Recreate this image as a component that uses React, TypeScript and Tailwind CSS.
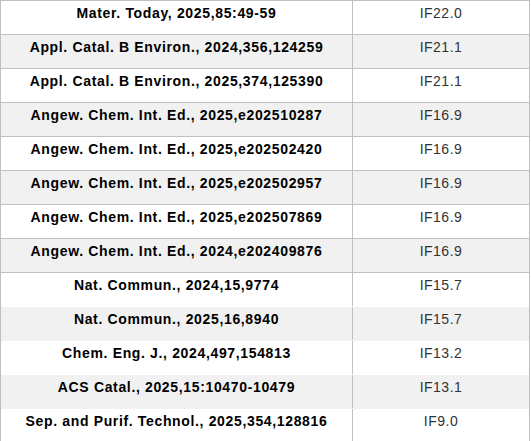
const papers = [
  { ref: 'Mater. Today, 2025,85:49-59', impact: 'IF22.0' },
  { ref: 'Appl. Catal. B Environ., 2024,356,124259', impact: 'IF21.1' },
  { ref: 'Appl. Catal. B Environ., 2025,374,125390', impact: 'IF21.1' },
  { ref: 'Angew. Chem. Int. Ed., 2025,e202510287', impact: 'IF16.9' },
  { ref: 'Angew. Chem. Int. Ed., 2025,e202502420', impact: 'IF16.9' },
  { ref: 'Angew. Chem. Int. Ed., 2025,e202502957', impact: 'IF16.9' },
  { ref: 'Angew. Chem. Int. Ed., 2025,e202507869', impact: 'IF16.9' },
  { ref: 'Angew. Chem. Int. Ed., 2024,e202409876', impact: 'IF16.9' },
  { ref: 'Nat. Commun., 2024,15,9774', impact: 'IF15.7' },
  { ref: 'Nat. Commun., 2025,16,8940', impact: 'IF15.7' },
  { ref: 'Chem. Eng. J., 2024,497,154813', impact: 'IF13.2' },
  { ref: 'ACS Catal., 2025,15:10470-10479', impact: 'IF13.1' },
  { ref: 'Sep. and Purif. Technol., 2025,354,128816', impact: 'IF9.0' },
];

export default function App() {
  return (
    <div className="w-[531px] h-[441px] overflow-hidden bg-white font-['Liberation_Sans',Arial,sans-serif]">
      <div className="w-[530px] border-t border-l border-r border-[#c0c0c0]">
        {papers.map((p, i) => (
          <div
            key={i}
            className={`flex h-[34px] border-b ${i < 8 ? 'border-[#c0c0c0]' : 'border-transparent'} ${
              i % 2 === 1 ? 'bg-[#f1f1f1]' : 'bg-white'
            }`}
          >
            <div className="w-[352px] shrink-0 border-r border-[#c0c0c0] pt-[2px] text-center text-[14px] leading-[20px] font-bold tracking-[0.65px] text-black">
              {p.ref}
            </div>
            <div className="flex-1 pt-[2px] text-center text-[14px] leading-[20px] tracking-[0.5px] text-[#333]">
              {p.impact}
            </div>
          </div>
        ))}
      </div>
    </div>
  );
}
